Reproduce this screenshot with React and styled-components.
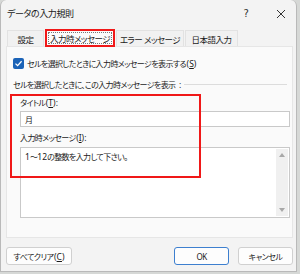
import React from "react";
import styled, { createGlobalStyle } from "styled-components";

const GlobalStyle = createGlobalStyle`
  html, body {
    margin: 0;
    padding: 0;
    background: #d6d8d6;
  }
  body {
    font-family: "Noto Sans", "Noto Sans CJK JP", sans-serif;
    font-feature-settings: "palt";
    font-size: 8px;
    letter-spacing: -0.6px;
    color: #1a1a1a;
  }
`;

const Dialog = styled.div`
  position: relative;
  box-sizing: border-box;
  width: 297px;
  height: 272px;
  background: #f3f3f3;
  border: 1px solid #b9b9b9;
  border-top: none;
  border-radius: 6px 6px 0 0;
  display: flex;
  flex-direction: column;
`;

const TitleBar = styled.div`
  height: 27px;
  display: flex;
  align-items: center;
  padding: 0 0 0 6px;
  font-size: 9px;
  letter-spacing: -0.4px;
`;

const Title = styled.span`
  flex: 1;
`;

const TitleButton = styled.span`
  width: ${({ $w }) => $w}px;
  display: flex;
  justify-content: center;
  align-items: center;
  font-size: 10px;
  font-family: "DejaVu Sans", sans-serif;
  color: #333;
`;

const TabRow = styled.div`
  display: flex;
  align-items: flex-end;
  padding-left: 6px;
  height: 19px;
  gap: 1px;
`;

const Tab = styled.div`
  box-sizing: border-box;
  width: ${({ $w }) => $w}px;
  height: ${({ $active }) => ($active ? "18px" : "16px")};
  display: flex;
  align-items: center;
  justify-content: center;
  font-size: 8.5px;
  letter-spacing: -0.5px;
  white-space: nowrap;
  background: ${({ $active }) => ($active ? "#fbfbfb" : "#f1f1f1")};
  border: 1px solid #e2e2e2;
  border-bottom: none;
  margin-bottom: ${({ $active }) => ($active ? "-1px" : "0")};
  position: relative;
  z-index: ${({ $active }) => ($active ? 2 : 1)};
  ${({ $marked }) =>
    $marked &&
    `
    border: 2px solid #f01818;
    outline: 1px dotted #777;
    outline-offset: -4px;
  `}
`;

const Panel = styled.div`
  position: relative;
  box-sizing: border-box;
  margin: 0 3px 0 5px;
  height: 192px;
  background: #fafafa;
  border: 1px solid #e6e6e6;
  padding: 9px 5px 0 6px;
`;

const CheckRow = styled.label`
  display: flex;
  align-items: center;
  gap: 3px;
  height: 14px;
`;

const Check = styled.span`
  width: 11px;
  height: 11px;
  border-radius: 2px;
  background: #1b63b7;
  display: flex;
  align-items: center;
  justify-content: center;
`;

const GroupHead = styled.div`
  display: flex;
  align-items: center;
  gap: 3px;
  margin-top: 7px;
  height: 14px;
  &::after {
    content: "";
    flex: 1;
    height: 1px;
    background: #dcdcdc;
  }
`;

const Field = styled.div`
  padding-left: 7px;
`;

const FieldLabel = styled.div`
  height: 14px;
  margin-top: ${({ $top }) => $top}px;
  display: flex;
  align-items: center;
`;

const Input = styled.div`
  box-sizing: border-box;
  margin-top: 2px;
  width: 270px;
  height: 16px;
  background: #fff;
  border: 1px solid #c9c9c9;
  padding: 0 4px;
  display: flex;
  align-items: center;
`;

const TextArea = styled.div`
  box-sizing: border-box;
  margin-top: 3px;
  width: 270px;
  height: 71px;
  background: #fff;
  border: 1px solid #c9c9c9;
  display: flex;
`;

const AreaText = styled.div`
  flex: 1;
  padding: 2px 4px;
  line-height: 13px;
`;

const Digits = styled.span`
  letter-spacing: 0;
  font-size: 8.5px;
`;

const ScrollBar = styled.div`
  width: 12px;
  margin: 1px 1px 1px 0;
  background: #f0f0f0;
  display: flex;
  flex-direction: column;
  justify-content: space-between;
  align-items: center;
  padding: 4px 0;
  box-sizing: border-box;
`;

const Arrow = styled.span`
  width: 0;
  height: 0;
  border-left: 3.5px solid transparent;
  border-right: 3.5px solid transparent;
  ${({ $down }) =>
    $down ? "border-top: 4px solid #a8a8a8;" : "border-bottom: 4px solid #a8a8a8;"}
`;

const Annotation = styled.div`
  position: absolute;
  left: 3px;
  top: 47px;
  width: 191px;
  height: 84px;
  box-sizing: border-box;
  border: 2px solid #f01818;
  pointer-events: none;
`;

const Footer = styled.div`
  display: flex;
  align-items: center;
  padding: 9px 3px 0 5px;
  gap: 9px;
`;

const Button = styled.button`
  box-sizing: border-box;
  height: 18px;
  width: ${({ $w }) => $w}px;
  margin-left: ${({ $push }) => ($push ? "auto" : "0")};
  background: #fdfdfd;
  border: 1px solid ${({ $primary }) => ($primary ? "#3d7fcf" : "#d0d0d0")};
  border-radius: 3px;
  font-family: inherit;
  font-feature-settings: "palt";
  font-size: 8px;
  letter-spacing: -0.5px;
  white-space: nowrap;
  color: #1a1a1a;
  padding: 0;
  display: flex;
  align-items: center;
  justify-content: center;
`;

const KeyHint = styled.span`
  letter-spacing: 0;
  font-size: 8.5px;
  margin-left: 0.5px;
  u {
    text-underline-offset: 1px;
  }
`;

const Mnemonic = ({ k, colon }) => (
  <KeyHint>
    (<u>{k}</u>){colon ? ":" : ""}
  </KeyHint>
);

export default function App() {
  return (
    <>
      <GlobalStyle />
      <Dialog>
        <TitleBar>
          <Title>データの入力規則</Title>
          <TitleButton $w={40}>?</TitleButton>
          <TitleButton $w={30}>
            <svg width="10" height="10" viewBox="0 0 10 10">
              <path d="M1 1 L9 9 M9 1 L1 9" stroke="#333" strokeWidth="1" />
            </svg>
          </TitleButton>
        </TitleBar>
        <TabRow>
          <Tab $w={37}>設定</Tab>
          <Tab $w={70} $active $marked>
            入力時メッセージ
          </Tab>
          <Tab $w={68}>エラー メッセージ</Tab>
          <Tab $w={53}>日本語入力</Tab>
        </TabRow>
        <Panel>
          <CheckRow>
            <Check>
              <svg width="9" height="9" viewBox="0 0 9 9">
                <path
                  d="M1.5 4.6 L3.6 6.6 L7.6 2.3"
                  fill="none"
                  stroke="#fff"
                  strokeWidth="1.3"
                />
              </svg>
            </Check>
            <span>
              セルを選択したときに入力時メッセージを表示する
              <Mnemonic k="S" />
            </span>
          </CheckRow>
          <GroupHead>
            セルを選択したときに、この入力時メッセージを表示<KeyHint>:</KeyHint>
          </GroupHead>
          <Field>
            <FieldLabel $top={4}>
              タイトル<Mnemonic k="T" colon />
            </FieldLabel>
            <Input>月</Input>
            <FieldLabel $top={3}>
              入力時メッセージ<Mnemonic k="I" colon />
            </FieldLabel>
            <TextArea>
              <AreaText>
                <Digits>1</Digits>～<Digits>12</Digits>の整数を入力して下さい。
              </AreaText>
              <ScrollBar>
                <Arrow />
                <Arrow $down />
              </ScrollBar>
            </TextArea>
          </Field>
          <Annotation />
        </Panel>
        <Footer>
          <Button $w={66}>
            すべてクリア<Mnemonic k="C" />
          </Button>
          <Button $w={55} $primary $push>
            OK
          </Button>
          <Button $w={55}>キャンセル</Button>
        </Footer>
      </Dialog>
    </>
  );
}
